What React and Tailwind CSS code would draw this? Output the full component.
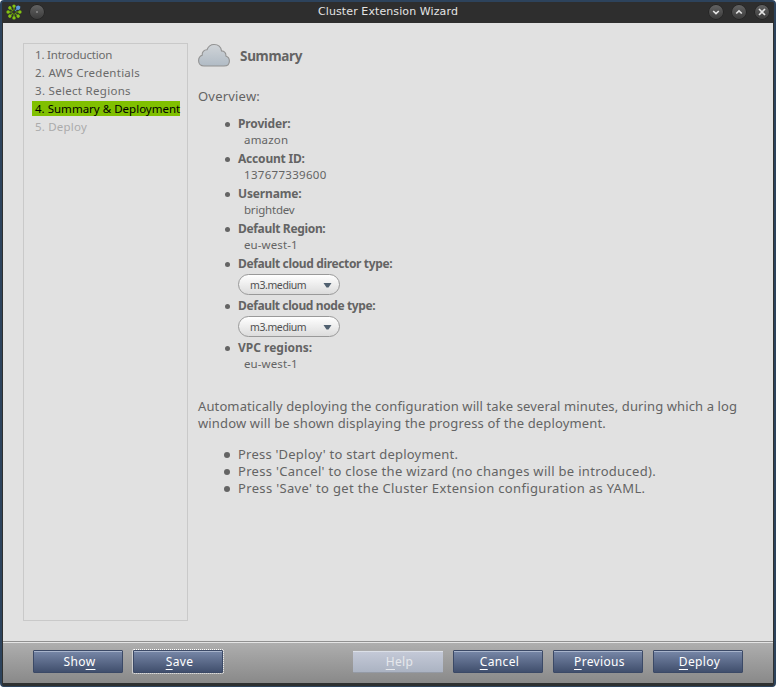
import React from "react";

const steps = [
  { label: "1. Introduction", cls: "text-[#6a6a6a] tracking-[-0.2px]" },
  { label: "2. AWS Credentials", cls: "text-[#6a6a6a] tracking-[0.25px]" },
  { label: "3. Select Regions", cls: "text-[#6a6a6a] tracking-[0.3px]" },
  { label: "4. Summary & Deployment", cls: "bg-[#80c000] text-black tracking-[0.01px]" },
  { label: "5. Deploy", cls: "text-[#ababab] tracking-[0.2px]" },
];

function Logo() {
  const petals = [0, 45, 90, 135, 180, 225, 270, 315];
  return (
    <svg className="h-4 w-4" viewBox="0 0 16 16">
      {petals.map((a) => (
        <g key={a} transform={`rotate(${a} 8 8)`}>
          <path d="M8 6.4V3" stroke={a === 45 ? "#4d8dd0" : "#6aa50c"} strokeWidth="1.1" />
          <circle cx="8" cy="2.1" r={a === 45 ? 2.1 : 1.7} fill={a === 45 ? "#5b9be0" : "#84c412"} />
        </g>
      ))}
    </svg>
  );
}

function TitleButton({ children }) {
  return (
    <span className="flex h-[14px] w-[14px] items-center justify-center rounded-full bg-linear-to-b from-[#626262] to-[#3c3c3c] shadow-[0_0_0_0.5px_#1c1c1c]">
      <svg className="h-[14px] w-[14px]" viewBox="0 0 14 14" fill="none" stroke="#e4e4e4" strokeWidth="1.6">
        {children}
      </svg>
    </span>
  );
}

function Cloud() {
  return (
    <svg className="h-6 w-8" viewBox="0 0 32 24">
      <defs>
        <linearGradient id="cloud" x1="0" y1="0" x2="0" y2="1">
          <stop offset="0" stopColor="#d0d4d8" />
          <stop offset="1" stopColor="#b0bbc5" />
        </linearGradient>
      </defs>
      <path
        d="M6 23C2.8 23 .6 20.8 .6 17.8C.6 15.1 2 13 4.2 12.3C3.8 9.3 6 6.7 9 6.8C10.2 3.5 12.6 1.5 16 1.5C20.2 1.5 23 4.2 23.5 7.9C26.4 8 28.2 10.1 27.9 12.9C30 13.7 31.4 15.5 31.4 17.9C31.4 20.9 29.2 23 26 23Z"
        fill="url(#cloud)"
        stroke="#929292"
        strokeWidth="1.1"
      />
    </svg>
  );
}

function Item({ label, value, cls = "", valueCls = "" }) {
  return (
    <li className="flex h-[35px]">
      <span className="mt-[6px] mr-[8px] h-[5px] w-[5px] rounded-full bg-[#646464]" />
      <div className="whitespace-nowrap">
        <div className={`h-4 text-[12px] leading-4 font-bold ${cls}`}>{label}</div>
        <div className={`pl-[6px] text-[11.5px] leading-4 ${valueCls}`}>{value}</div>
      </div>
    </li>
  );
}

function SelectItem({ label, cls }) {
  return (
    <li className="flex h-[42px]">
      <span className="mt-[6px] mr-[8px] h-[5px] w-[5px] rounded-full bg-[#646464]" />
      <div className="whitespace-nowrap">
        <div className={`h-[18px] text-[12px] leading-4 font-bold ${cls}`}>{label}</div>
        <div className="flex h-[21px] w-[102px] items-center justify-between rounded-full border border-[#999] bg-linear-to-b from-white to-[#dcdcdc] pr-[7px] pl-[11px] text-[10.5px] tracking-[-0.4px] text-[#505050]">
          <span className="pt-[2px]">m3.medium</span>
          <svg className="mt-px h-[5px] w-[9px]" viewBox="0 0 9 5"><path d="M.5 0h8L5.5 4.5h-2z" fill="#50606f" /></svg>
        </div>
      </div>
    </li>
  );
}

function Bullet({ children, cls }) {
  return (
    <li className="flex h-[17px] whitespace-nowrap">
      <span className="mt-[6px] mr-[8px] h-[6px] w-[6px] rounded-full bg-[#646464]" />
      <span className={cls}>{children}</span>
    </li>
  );
}

function Button({ before = "", hot, after = "", cls = "border-[#3b4966] from-[#7888a8] to-[#414f6d] text-white shadow-[inset_0_1px_0_#a8b4cb]" }) {
  return (
    <button className={`flex h-[23px] w-[90px] items-center justify-center rounded-[1px] border bg-linear-to-b pt-px pl-[3px] text-[12px] leading-none tracking-[0.35px] ${cls}`}>
      <span>{before}<span className="underline underline-offset-[3px]">{hot}</span>{after}</span>
    </button>
  );
}

export default function App() {
  return (
    <div className="h-[687px] w-[776px] overflow-hidden bg-white font-['Noto_Sans','DejaVu_Sans',sans-serif] text-[#646464]">
      <div className="flex h-full flex-col overflow-hidden rounded-[4px] border-x-2 border-t-2 border-b border-[#2d435c] bg-[#2e3030]">
        <header className="flex h-[21px] shrink-0 items-center bg-[#2e2e2e] pr-[5px] pl-[4px]">
          <div className="flex w-[120px] items-center gap-[8px] pb-[2px]">
            <Logo />
            <TitleButton><circle cx="7" cy="7" r=".7" fill="#ccc" stroke="none" /></TitleButton>
          </div>
          <h1 className="flex-1 pl-px pb-[1px] text-center font-['DejaVu_Sans',sans-serif] text-[11px] leading-[18px] tracking-[0.1px] text-[#e4e4e4]">Cluster Extension Wizard</h1>
          <div className="flex w-[120px] justify-end gap-[9px] pb-[2px]">
            <TitleButton><path d="M4.2 6L7 8.7L9.8 6" /></TitleButton>
            <TitleButton><path d="M4.2 8.5L7 5.8L9.8 8.5" /></TitleButton>
            <TitleButton><path d="M4 4L10 10M10 4L4 10" /></TitleButton>
          </div>
        </header>

        <div className="mx-px flex h-[660px] shrink-0 flex-col bg-[#e1e1e1]">
          <div className="flex h-[618px] shrink-0 pt-5 pl-5">
            <nav className="h-[578px] w-[165px] shrink-0 border border-[#c9c9c9] pt-[3px] pl-2">
              <ul className="w-[148px]">
                {steps.map((s) => (
                  <li key={s.label} className="h-[18px]">
                    <div className={`h-[15px] w-full pl-[3px] text-[11.5px] leading-[15px] whitespace-nowrap ${s.cls}`}>{s.label}</div>
                  </li>
                ))}
              </ul>
            </nav>

            <main className="pl-[10px]">
              <div className="flex h-6 items-center gap-[10px]">
                <Cloud />
                <h2 className="pt-[2px] text-[13.5px] font-bold tracking-[-0.3px]">Summary</h2>
              </div>
              <p className="mt-[20px] h-[18px] text-[13px] leading-[18px] tracking-[0.2px]">Overview:</p>
              <ul className="mt-[11px] pl-[27px]">
                <Item label="Provider:" value="amazon" cls="tracking-[-0.15px]" valueCls="tracking-[0.2px]" />
                <Item label="Account ID:" value="137677339600" cls="tracking-[-0.2px]" valueCls="tracking-[0.3px]" />
                <Item label="Username:" value="brightdev" cls="tracking-[-0.15px]" valueCls="tracking-[-0.2px]" />
                <Item label="Default Region:" value="eu-west-1" cls="tracking-[-0.33px]" valueCls="tracking-[0.1px]" />
                <SelectItem label="Default cloud director type:" cls="tracking-[-0.36px]" />
                <SelectItem label="Default cloud node type:" cls="tracking-[-0.39px]" />
                <Item label="VPC regions:" value="eu-west-1" cls="tracking-[0px]" valueCls="tracking-[0.1px]" />
              </ul>
              <p className="mt-[23px] text-[13px] leading-[17px] whitespace-nowrap">
                <span className="tracking-[0.115px]">Automatically deploying the configuration will take several minutes, during which a log</span>
                <br />
                <span className="tracking-[0.145px]">window will be shown displaying the progress of the deployment.</span>
              </p>
              <ul className="mt-[14px] pl-[26px] text-[13px] leading-[17px]">
                <Bullet cls="tracking-[0.22px]">Press 'Deploy' to start deployment.</Bullet>
                <Bullet cls="tracking-[0.31px]">Press 'Cancel' to close the wizard (no changes will be introduced).</Bullet>
                <Bullet cls="tracking-[0.34px]">Press 'Save' to get the Cluster Extension configuration as YAML.</Bullet>
              </ul>
            </main>
          </div>

          <footer className="flex h-[42px] shrink-0 justify-between border-t border-[#909090] bg-linear-to-b from-[#afafaf] to-[#898989] px-[30px] pt-[8px] shadow-[inset_0_1px_0_#e4e4e4]">
            <div className="flex gap-[10px]">
              <Button before="Sho" hot="w" />
              <Button hot="S" after="ave" cls="border-[#3b4966] from-[#7888a8] to-[#414f6d] text-white shadow-[inset_0_1px_0_#a8b4cb] outline-1 outline-dotted outline-white" />
            </div>
            <div className="flex gap-[10px]">
              <Button hot="H" after="elp" cls="border-x-0 border-t-[#aaaaaa] border-b-[#949aa5] from-[#c5cad8] to-[#abb3c2] text-[#e6e8ec] shadow-[inset_0_1px_0_#dce0e8]" />
              <Button hot="C" after="ancel" />
              <Button hot="P" after="revious" />
              <Button hot="D" after="eploy" />
            </div>
          </footer>
        </div>
      </div>
    </div>
  );
}
